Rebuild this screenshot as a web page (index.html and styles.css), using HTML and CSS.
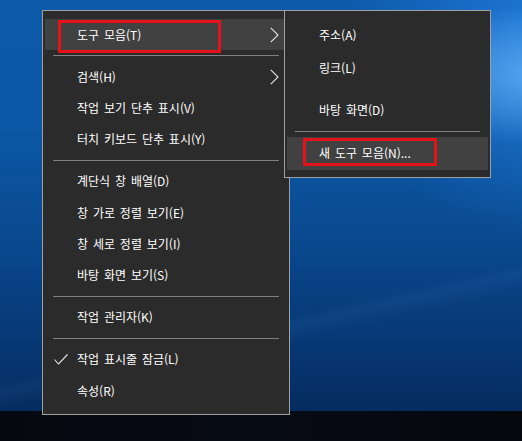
FILE: index.html
```html
<!DOCTYPE html>
<html lang="ko">
<head>
<meta charset="utf-8">
<title>작업 표시줄 메뉴</title>
<link rel="stylesheet" href="styles.css">
</head>
<body>
<div class="screen">
  <div class="desktop">
    <div class="menu main-menu">
      <div class="item hover">
        <span class="icon"></span>
        <span class="label">도구 모음(T)</span>
        <svg class="chev" width="9" height="16" viewBox="0 0 9 16"><polyline points="0.8,0.8 8,8 0.8,15.2" fill="none" stroke="#e6e6e6" stroke-width="1.1"/></svg>
        <span class="mark mark-main"></span>
      </div>
      <div class="sep"></div>
      <div class="item">
        <span class="icon"></span>
        <span class="label">검색(H)</span>
        <svg class="chev" width="9" height="16" viewBox="0 0 9 16"><polyline points="0.8,0.8 8,8 0.8,15.2" fill="none" stroke="#e6e6e6" stroke-width="1.1"/></svg>
      </div>
      <div class="item"><span class="icon"></span><span class="label">작업 보기 단추 표시(V)</span></div>
      <div class="item"><span class="icon"></span><span class="label">터치 키보드 단추 표시(Y)</span></div>
      <div class="sep"></div>
      <div class="item"><span class="icon"></span><span class="label">계단식 창 배열(D)</span></div>
      <div class="item"><span class="icon"></span><span class="label">창 가로 정렬 보기(E)</span></div>
      <div class="item"><span class="icon"></span><span class="label">창 세로 정렬 보기(I)</span></div>
      <div class="item"><span class="icon"></span><span class="label">바탕 화면 보기(S)</span></div>
      <div class="sep"></div>
      <div class="item"><span class="icon"></span><span class="label">작업 관리자(K)</span></div>
      <div class="sep"></div>
      <div class="item">
        <span class="icon"><svg class="check" width="14" height="11" viewBox="0 0 14 11"><polyline points="0.5,5.5 4.5,10 13.5,0.5" fill="none" stroke="#e6e6e6" stroke-width="1.1"/></svg></span>
        <span class="label">작업 표시줄 잠금(L)</span>
      </div>
      <div class="item"><span class="icon"></span><span class="label">속성(R)</span></div>
    </div>

    <div class="menu sub-menu">
      <div class="sitem"><span class="label">주소(A)</span></div>
      <div class="sitem"><span class="label">링크(L)</span></div>
      <div class="spacer"></div>
      <div class="sitem"><span class="label">바탕 화면(D)</span></div>
      <div class="ssep"></div>
      <div class="sitem hover"><span class="label">새 도구 모음(N)...</span><span class="mark mark-sub"></span></div>
    </div>
  </div>
  <div class="taskbar"></div>
</div>
</body>
</html>
```
FILE: styles.css
```css
* { box-sizing: border-box; }
html, body { margin: 0; padding: 0; }
body {
  width: 522px;
  height: 441px;
  overflow: hidden;
  font-family: "Noto Sans CJK KR", "Noto Sans", sans-serif;
  font-size: 12px;
  color: #ffffff;
  background: #04070e;
}
.screen {
  display: flex;
  flex-direction: column;
  width: 522px;
  height: 441px;
}
.desktop {
  position: relative;
  height: 411px;
  flex: none;
  background:
    linear-gradient(167deg, transparent 0%, transparent 72%, rgba(120,180,255,0.06) 74%, transparent 77%),
    radial-gradient(ellipse 140px 70px at 540px 75px, rgba(110,190,255,0.7), rgba(70,150,240,0.0) 100%),
    radial-gradient(ellipse 220px 200px at 560px 40px, rgba(40,130,230,0.8), rgba(20,100,200,0) 100%),
    linear-gradient(to bottom, #0c5aaa 0%, #0b58a6 30%, #0a4b92 55%, #073a78 80%, #052c60 100%);
}
.taskbar {
  height: 30px;
  flex: none;
  background: linear-gradient(to right, #05080f, #070b15 50%, #05070d);
}

.menu {
  position: absolute;
  top: 10px;
  background: #2b2b2b;
  border: 1px solid #a0a0a0;
  padding: 8px 2px;
}
.main-menu {
  left: 42px;
  width: 248px;
  z-index: 1;
}
.sub-menu {
  left: 284px;
  width: 207px;
  z-index: 2;
  padding: 8px 2px 7px;
}

.item {
  position: relative;
  display: flex;
  align-items: center;
  height: 31.33px;
  white-space: nowrap;
  word-spacing: 1.5px;
}
.item.hover, .sitem.hover { background: #414141; }
.icon {
  width: 32px;
  flex: none;
  display: flex;
  align-items: center;
}
.check { margin-left: 9px; display: block; }
.label { flex: 1; line-height: 1; }
.chev { flex: none; margin-right: 8px; display: block; }

.sep {
  height: 10.67px;
  display: flex;
  align-items: center;
  padding: 0 8px;
}
.sep::before, .ssep::before {
  content: "";
  display: block;
  width: 100%;
  height: 1px;
  background: #808080;
}

.sitem {
  position: relative;
  display: flex;
  align-items: center;
  height: 32.5px;
  padding-left: 32px;
  white-space: nowrap;
  word-spacing: 1.5px;
}
.spacer { height: 10px; }
.ssep {
  height: 10.5px;
  display: flex;
  align-items: center;
  padding: 0 8px;
}

.mark {
  position: absolute;
  border: 3px solid #e5121b;
  pointer-events: none;
}
.mark-main {
  left: 13px;
  top: 0.5px;
  width: 163px;
  height: 33px;
}
.mark-sub {
  left: 16px;
  top: 1px;
  width: 134px;
  height: 28px;
}
```
